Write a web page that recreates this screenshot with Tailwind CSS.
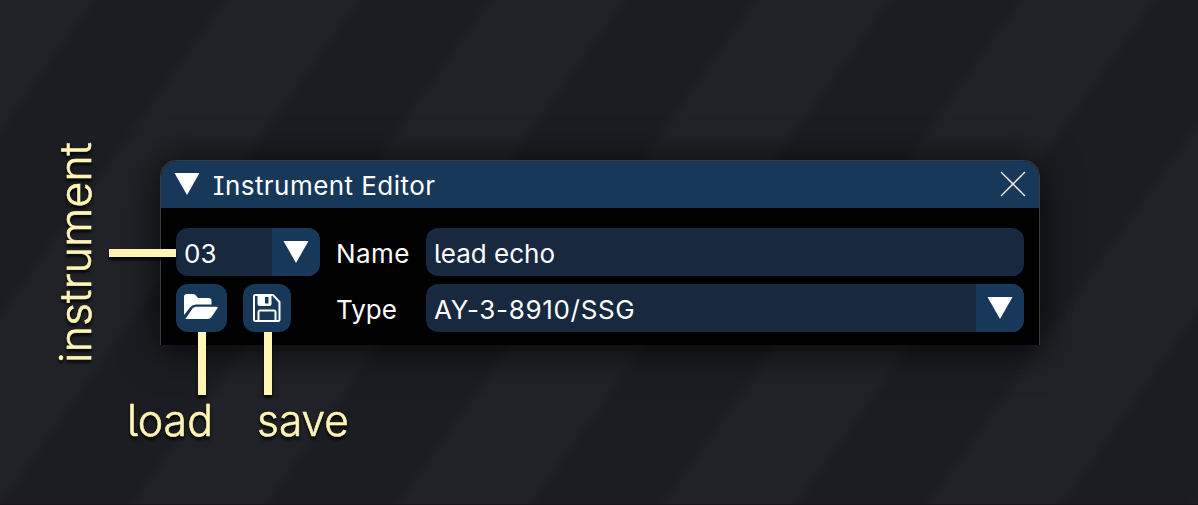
<!DOCTYPE html>
<html lang="en"><head><meta charset="utf-8"><title>Instrument Editor</title>
<script src="https://cdn.jsdelivr.net/npm/@tailwindcss/browser@4"></script></head>
<body class="overflow-hidden font-['Inter',sans-serif] [font-feature-settings:'cv05','cv08']">
<main class="relative h-[505px] w-[1198px] overflow-hidden border-b border-[#17161b] bg-[repeating-linear-gradient(125.4deg,#212227_0px,#212227_70px,#1c1d22_82px,#1c1d22_178px,#212227_190px,#212227_216.2px)] pt-40 pl-40">
  <section class="h-[185px] w-[880px] rounded-t-[17px] border border-b-0 border-[#3a3d49] bg-black text-[26px] text-white shadow-[0_4px_40px_rgba(0,0,0,0.8)]">
    <header class="flex h-[47px] items-center rounded-t-2xl bg-[#183859] px-[13px]">
      <svg class="mb-0.5 h-[22px] w-[26px]" viewBox="0 0 26 22" fill="white"><path d="M.5 0h25L13 22z"/></svg>
      <h1 class="ml-[13px] pt-0.5 font-normal tracking-[0.45px] whitespace-nowrap">Instrument Editor</h1>
      <svg class="mb-px ml-auto h-[26px] w-[26px]" viewBox="0 0 26 26" fill="none" stroke="white" stroke-width="1.3"><path d="M1 1l24 24M25 1L1 25"/></svg>
    </header>
    <div class="flex flex-col gap-2 px-[15px] pt-5">
      <div class="flex h-12">
        <div class="flex w-36 overflow-hidden rounded-xl bg-[#17283f]">
          <span class="w-24 pt-1.5 pl-2 leading-[40px]">03</span>
          <span class="flex w-12 justify-center bg-[#183859] pt-[13px]"><svg class="h-[22px] w-[26px]" viewBox="0 0 26 22" fill="white"><path d="M.5 0h25L13 22z"/></svg></span>
        </div>
        <label class="w-[106px] pt-1.5 pl-4 leading-[40px] tracking-[0.4px]">Name</label>
        <div class="w-[598px] rounded-xl bg-[#17283f] pt-1.5 pl-2 leading-[40px]">lead echo</div>
      </div>
      <div class="flex h-12">
        <button class="flex w-[51px] rounded-xl bg-[#183859] pt-[9px] pl-2"><svg class="h-[28px] w-[34px]" viewBox="0 0 34 28" fill="white"><path d="M0 22V4Q0 1 3 1H9.500Q11 1 12 2.500L14 5H24.500Q27.500 5 27.500 8V11.500H12Q8.500 11.500 6.500 14Z"/><path d="M1.300 26L8.500 15.500Q9.800 13.700 12 13.700H32.500Q34.500 13.700 33.300 15.500L27.500 24Q26 26 23.500 26Z"/></svg></button>
        <button class="ml-4 flex w-12 rounded-xl bg-[#183859] pt-[9px] pl-[9px]"><svg class="h-[30px] w-[30px]" viewBox="0 0 30 30" fill="none" stroke="white" stroke-width="2"><path d="M3 2H21L27.500 9V26.500Q27.500 28 26 28H3.500Q2 28 2 26.500V3Q2 2 3 2Z"/><path d="M6.500 28V19Q6.500 17.500 8 17.500H22Q23.500 17.500 23.500 19V28"/><path fill="white" fill-rule="evenodd" stroke="none" d="M5.500 2H19.500V11Q19.500 13 17.500 13H7.500Q5.500 13 5.500 11ZM13 4V10.500H16.500V4Z"/></svg></button>
        <label class="ml-[29px] w-[106px] pt-1.5 pl-4 leading-[40px]">Type</label>
        <div class="flex w-[598px] overflow-hidden rounded-xl bg-[#17283f]">
          <span class="flex-1 pt-1.5 pl-2 leading-[40px] tracking-[0.68px]">AY-3-8910/SSG</span>
          <span class="flex w-12 justify-center bg-[#183859] pt-[13px]"><svg class="h-[22px] w-[26px]" viewBox="0 0 26 22" fill="white"><path d="M.5 0h25L13 22z"/></svg></span>
        </div>
      </div>
    </div>
  </section>
  <i class="absolute top-[249px] left-[109px] h-2 w-[67px] bg-[#fff5b5] shadow-[0_3px_3px_rgba(0,0,0,0.8)]"></i>
  <i class="absolute top-[332px] left-[198px] h-[63px] w-2 bg-[#fff5b5] shadow-[0_3px_3px_rgba(0,0,0,0.8)]"></i>
  <i class="absolute top-[332px] left-[264px] h-[63px] w-2 bg-[#fff5b5] shadow-[0_3px_3px_rgba(0,0,0,0.8)]"></i>
  <svg class="absolute inset-0 h-full w-full fill-[#fff5b5] stroke-[#fff5b5] stroke-[0.6px] text-[43px] font-light drop-shadow-[0_3px_1.5px_rgba(0,0,0,0.8)]">
    <text x="127" y="436" textLength="86" lengthAdjust="spacingAndGlyphs">load</text>
    <text x="257" y="436" textLength="92" lengthAdjust="spacingAndGlyphs">save</text>
    <text transform="translate(91 363) rotate(-90)" textLength="221" lengthAdjust="spacingAndGlyphs">instrument</text>
  </svg>
</main>
</body></html>
